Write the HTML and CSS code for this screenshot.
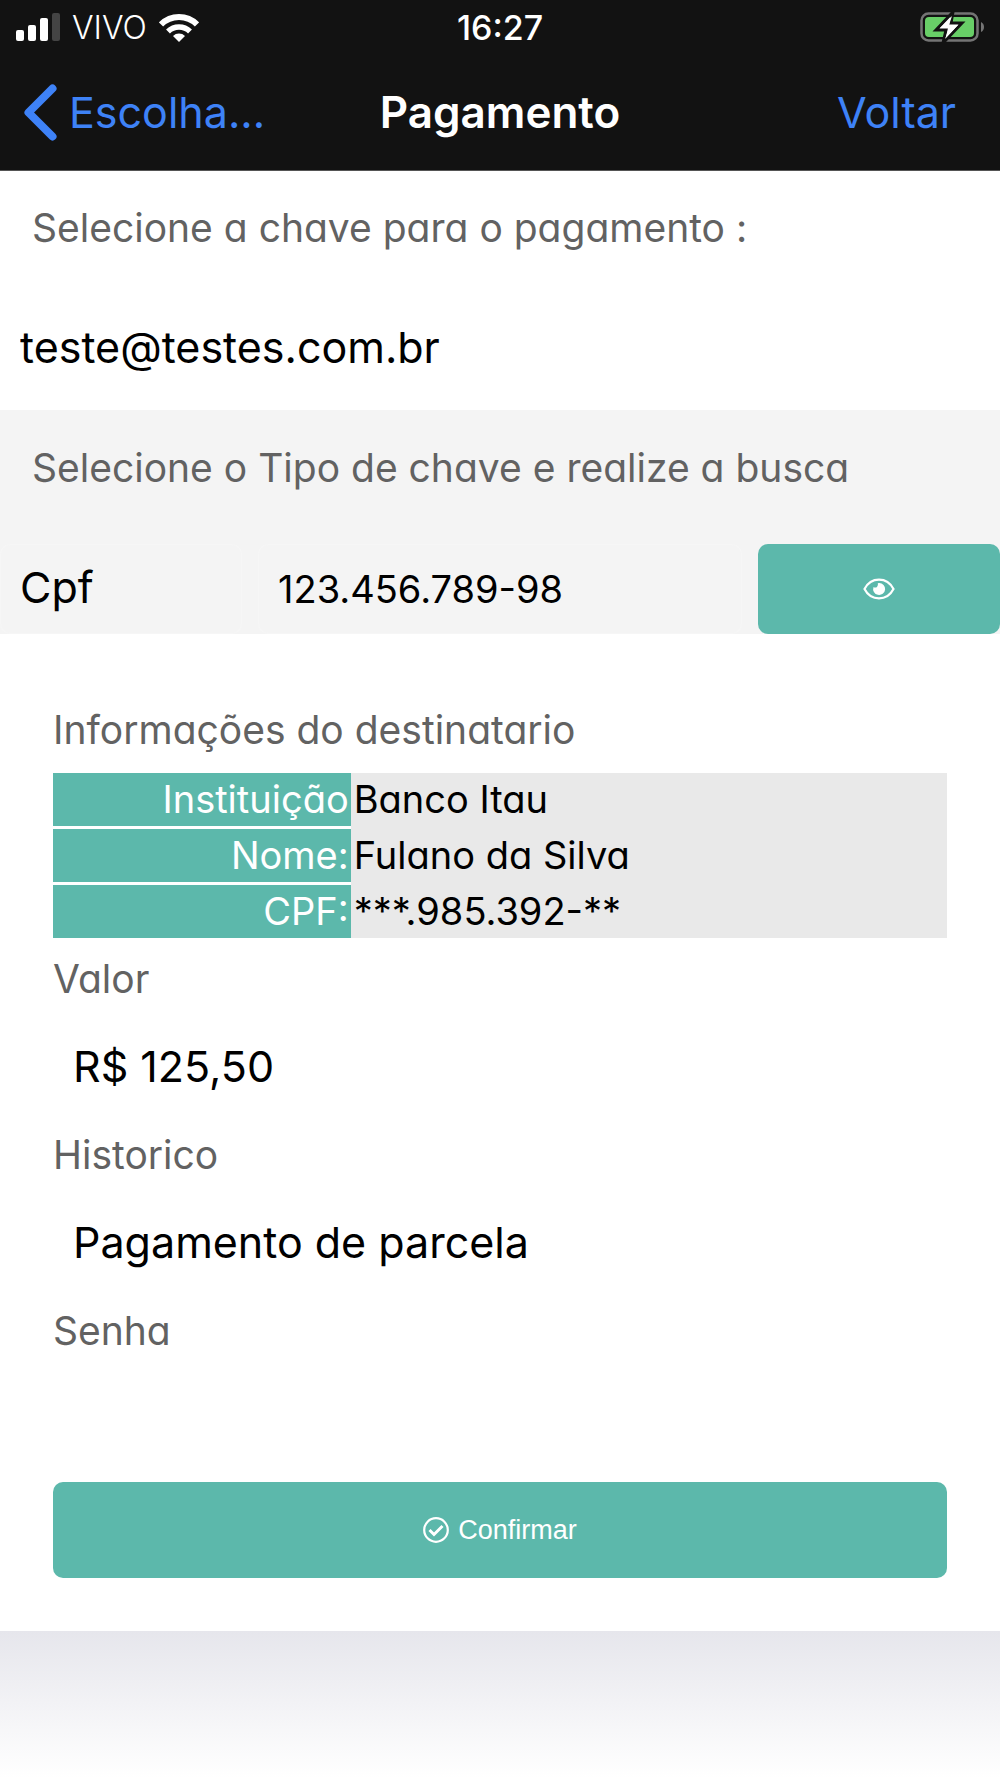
FILE: index.html
```html
<!DOCTYPE html>
<html lang="pt-BR">
<head>
    <meta charset="utf-8">
    <title>Pagamento</title>
    <meta name="viewport" content="width=device-width, initial-scale=1">
    <link rel="stylesheet" href="styles.css">
</head>

<body>
<header class="topo">
    <div class="status">
        <div class="operadora">
            <svg width="44" height="28" viewBox="0 0 44 28" fill="#fff" aria-hidden="true">
                <rect x="0" y="17" width="8" height="11" rx="2"/>
                <rect x="12" y="12" width="8" height="16" rx="2"/>
                <rect x="24" y="5" width="8" height="23" rx="2"/>
                <rect x="36" y="0" width="8" height="28" rx="2" fill="#444"/>
            </svg>
            <span class="nome-operadora">VIVO</span>
            <svg width="40" height="29" viewBox="0 0 40 29" fill="none" stroke="#fff" aria-hidden="true">
                <path d="M2 11.5a25.5 25.5 0 0 1 36 0" stroke-width="6"/>
                <path d="M9 18.5a15.6 15.6 0 0 1 22 0" stroke-width="5.5"/>
                <path d="M20 29l-6-6a8.5 8.5 0 0 1 12 0z" fill="#fff" stroke="none"/>
            </svg>
        </div>
        <span class="hora">16:27</span>
        <svg class="bateria" width="64" height="32" viewBox="0 0 64 32" aria-hidden="true">
            <rect x="1.500" y="2.500" width="56" height="27" rx="7" fill="none" stroke="#747474" stroke-width="2.500"/>
            <rect x="5" y="6" width="49" height="20" rx="4" fill="#68ce67"/>
            <path d="M61 11q3 1.500 3 5t-3 5z" fill="#747474"/>
            <path d="M33 1L16 19h10l-3 13L42 12H31z" fill="#fff" stroke="#121212" stroke-width="3" stroke-linejoin="miter"/>
            <path d="M32 5L20 17h9l-4 11 13-14h-9z" fill="#fff"/>
        </svg>
    </div>
    <nav class="nav">
        <a class="voltar" href="#">
            <svg width="33" height="57" viewBox="0 0 33 57" fill="none" stroke="#3e82f7" stroke-width="8" stroke-linecap="round" stroke-linejoin="round" aria-hidden="true">
                <path d="M28.500 4.500L4.500 28.500l24 24"/>
            </svg>
            Escolha...
        </a>
        <h1 class="titulo">Pagamento</h1>
        <a class="fechar" href="#">Voltar</a>
    </nav>
</header>

<form class="pagamento">
    <section class="bloco">
        <label class="rotulo" for="chave">Selecione a chave para o pagamento :</label>
        <select id="chave" class="campo">
            <option>teste@testes.com.br</option>
        </select>
    </section>

    <section class="bloco busca">
        <label class="rotulo" for="tipo">Selecione o Tipo de chave e realize a busca</label>
        <div class="linha-busca">
            <select id="tipo" class="campo borda">
                <option>Cpf</option>
            </select>
            <input id="documento" class="campo borda documento" type="text" value="123.456.789-98" aria-label="Documento">
            <button class="botao" type="button" aria-label="Buscar">
                <svg width="32" height="22" viewBox="0 0 32 22" fill="none" aria-hidden="true">
                    <path d="M1.500 11C8-1.500 24-1.500 30.500 11 24 23.500 8 23.500 1.500 11z" stroke="#fff" stroke-width="2.200"/>
                    <path d="M16 5a6 6 0 1 1-5.500 4q1.500 1 3.500 0 1.500-1.200.8-3.800Q15.300 5 16 5z" fill="#fff"/>
                </svg>
            </button>
        </div>
    </section>

    <section class="dados">
        <h2 class="rotulo">Informações do destinatario</h2>
        <table class="destinatario">
            <tr>
                <th scope="row">Instituição</th>
                <td>Banco Itau</td>
            </tr>
            <tr>
                <th scope="row">Nome:</th>
                <td>Fulano da Silva</td>
            </tr>
            <tr>
                <th scope="row">CPF:</th>
                <td>***.985.392-**</td>
            </tr>
        </table>

        <label class="rotulo" for="valor">Valor</label>
        <input id="valor" class="campo" type="text" value="R$ 125,50">

        <label class="rotulo" for="historico">Historico</label>
        <input id="historico" class="campo" type="text" value="Pagamento de parcela">

        <label class="rotulo" for="senha">Senha</label>
        <input id="senha" class="campo" type="password">

        <button class="botao confirmar" type="submit">
            <svg width="26" height="26" viewBox="0 0 26 26" fill="none" stroke="#fff" aria-hidden="true">
                <circle cx="13" cy="13" r="11.800" stroke-width="2.200"/>
                <path d="M6.500 13l4.500 4.500 8.500-8.500" stroke-width="3"/>
            </svg>
            Confirmar
        </button>
    </section>
</form>
</body>
</html>
```
FILE: styles.css
```css
* {
    box-sizing: border-box;
}

body {
    display: flex;
    flex-direction: column;
    min-height: 100vh;
    margin: 0;
    font-family: Inter, "Liberation Sans", sans-serif;
    background-color: #fff;
}

svg {
    flex: none;
}

/* header */
.topo {
    background-color: #121212;
    border-bottom: 1px solid #555;
    color: #fff;
}

.status {
    display: grid;
    grid-template-columns: 1fr auto 1fr;
    align-items: center;
    height: 54px;
    padding: 0 16px;
}

.operadora {
    display: flex;
    align-items: center;
    gap: 12px;
}

.nome-operadora {
    font-size: 32px;
    font-weight: 300;
}

.hora {
    font-size: 34px;
    font-weight: 500;
}

.bateria {
    justify-self: end;
}

.nav {
    display: grid;
    grid-template-columns: 1fr auto 1fr;
    align-items: center;
    height: 116px;
    padding: 0 24px;
}

.nav a {
    color: #3e82f7;
    font-size: 43px;
    text-decoration: none;
}

.nav .voltar {
    display: flex;
    align-items: center;
    gap: 12px;
}

.titulo {
    margin: 0;
    font-size: 44px;
    font-weight: 600;
}

.nav .fechar {
    justify-self: end;
    padding-right: 20px;
}

/* form */
.pagamento {
    flex: 1;
    display: flex;
    flex-direction: column;
}

.pagamento::after {
    content: "";
    flex: 1;
    background: linear-gradient(#e6e6ec, #fff);
}

.bloco {
    padding: 29px 0 16px;
}

.bloco .rotulo {
    margin: 0 32px 48px;
}

.busca {
    padding: 30px 0 0;
    background-color: #f4f4f4;
}

.rotulo {
    display: block;
    margin: 0;
    color: #626262;
    font-size: 39px;
    font-weight: 400;
    font-feature-settings: "cv11";
    line-height: 56px;
}

.campo {
    display: block;
    width: 100%;
    height: 90px;
    margin: 0;
    padding: 0 20px;
    appearance: none;
    border: 0;
    border-radius: 10px;
    background-color: transparent;
    color: #000;
    font-family: inherit;
    font-size: 43px;
}

select.campo {
    padding-bottom: 4px;
}

.linha-busca {
    display: grid;
    grid-template-columns: 1fr 2fr 1fr;
    gap: 16px;
}

.borda {
    box-shadow: inset 0 0 0 1px #f6f6f6;
}

.documento {
    font-size: 38px;
}

.botao {
    display: flex;
    align-items: center;
    justify-content: center;
    gap: 9px;
    padding: 0;
    border: 0;
    border-radius: 10px;
    background-color: #5cb8ab;
    color: #fff;
    font-family: "Liberation Sans", Arial, sans-serif;
    font-size: 27px;
}

.dados {
    padding: 68px 53px 53px;
}

.dados .campo {
    margin: 14px 0 16px;
}

.destinatario {
    width: 100%;
    margin: 15px 0 13px;
    border-spacing: 0;
    table-layout: fixed;
    background-color: #e9e9e9;
    font-size: 38px;
    font-feature-settings: "cv11";
    line-height: 53px;
}

.destinatario th {
    width: 33.3%;
    padding: 0 2px;
    border-bottom: 3px solid #fff;
    background-color: #5cb8ab;
    color: #fff;
    font-weight: 400;
    text-align: right;
}

.destinatario td {
    padding: 0 3px;
    vertical-align: top;
}

.destinatario tr:last-child th {
    border-bottom: 0;
}

.confirmar {
    width: 100%;
    height: 96px;
    margin-top: 19px;
}
```
